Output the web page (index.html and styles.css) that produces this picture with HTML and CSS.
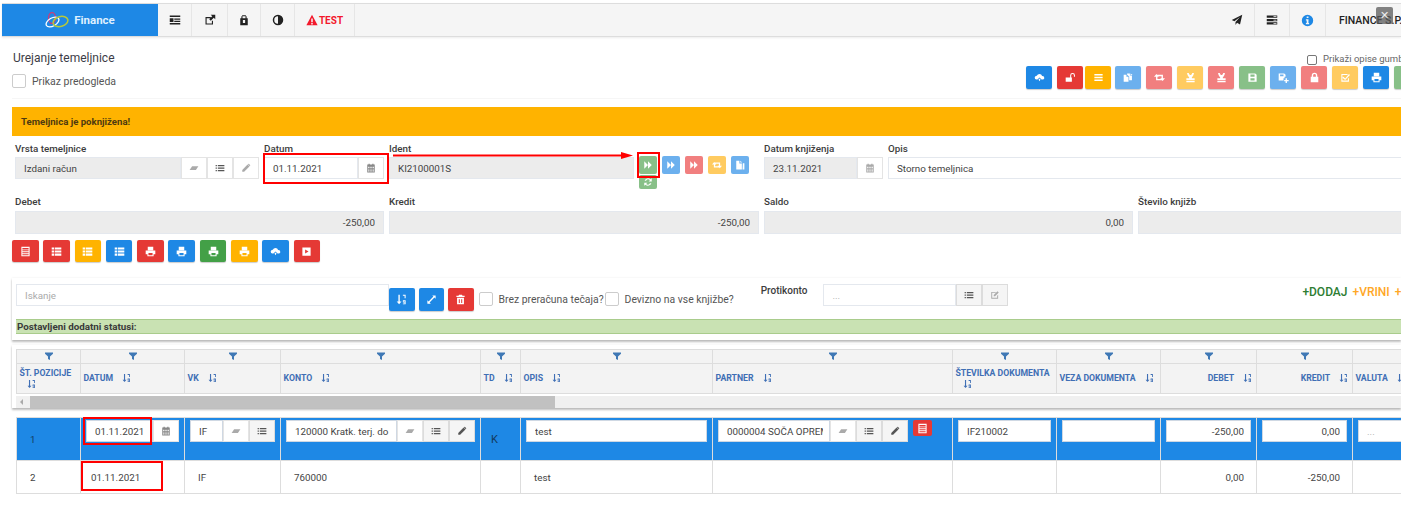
FILE: index.html
```html
<!DOCTYPE html>
<html lang="sl">
<head>
    <meta charset="UTF-8">
    <title>Urejanje temeljnice</title>
    <link rel="stylesheet" href="styles.css">
</head>
<body>
    <svg class="sprite" width="0" height="0">
        <symbol id="i-indent" viewBox="0 0 16 16"><path d="M1 2h14v2H1zM7 6h8v1.500H7zM7 9h8v1.500H7zM1 12h14v2H1zM1 5.500h5v5H1z"/></symbol>
        <symbol id="i-external" viewBox="0 0 16 16"><path d="M2 4h7v1.500H3.500v7h7V9H12v5H2zM9 1h6v6l-2-2-4 4-2-2 4-4z"/></symbol>
        <symbol id="i-bag" viewBox="0 0 16 16"><path d="M5.500 3V1.500h5V3h1v2.500H13V15H3V5.500h1.500V3zM6 5.500h4V3H6zM6.500 8v4h3V8z"/></symbol>
        <symbol id="i-adjust" viewBox="0 0 16 16"><path fill-rule="evenodd" d="M8 1a7 7 0 1 0 0 14A7 7 0 0 0 8 1zm0 2v10a5 5 0 0 1 0-10z"/></symbol>
        <symbol id="i-warn" viewBox="0 0 16 16"><path fill-rule="evenodd" d="M8 1l7.500 14H.5zM7 6v5h2V6zm0 6v2h2v-2z"/></symbol>
        <symbol id="i-plane" viewBox="0 0 16 16"><path d="M15 1L12 14 8 11.500 6 14.500V10.500L12 4 4.500 9.500 1 8z"/></symbol>
        <symbol id="i-server" viewBox="0 0 16 16"><path d="M1 2h14v3H1zM1 6.500h14v3H1zM1 11h14v3H1z"/><path fill="#f5f5f5" d="M10 3h4v1h-4zM10 7.500h4v1h-4zM10 12h4v1h-4z"/></symbol>
        <symbol id="i-info" viewBox="0 0 16 16"><path fill-rule="evenodd" d="M8 1a7 7 0 1 0 0 14A7 7 0 0 0 8 1zM7 3h2.200v2H7zM6 6.500h3.200V11H10v1.500H6V11h1V8H6z"/></symbol>
        <symbol id="i-cloud" viewBox="0 0 16 16"><path d="M8 3a4 4 0 0 1 3.800 2.800A3 3 0 0 1 15 9a2.800 2.800 0 0 1-2.500 2H11L8 8 5 11H3.500A3 3 0 0 1 1 8a3 3 0 0 1 3-2.500A4.500 4.500 0 0 1 8 3zM6.500 11H7V9.800h2V11h.5L8 13.500z"/></symbol>
        <symbol id="i-unlock" viewBox="0 0 16 16"><path d="M1 8h9v6H1zM7.500 8V5a3.500 3.500 0 0 1 7 0v2H13V5a2 2 0 0 0-4 0v3z"/></symbol>
        <symbol id="i-bars" viewBox="0 0 16 16"><path d="M2 3h12v2H2zM2 7h12v2H2zM2 11h12v2H2z"/></symbol>
        <symbol id="i-copy" viewBox="0 0 16 16"><path d="M1 4h4v3h3v7H1zM6 2h4v3h3v-.5V12H9V6.500L6 4zM11 2l3 2.500h-3z"/></symbol>
        <symbol id="i-retweet" viewBox="0 0 16 16"><path d="M3.500 3L7 7H5v3h5l2 2H3V7H0zM12.500 13L9 9h2V6H6L4 4h9v5h3z"/></symbol>
        <symbol id="i-stamp" viewBox="0 0 16 16"><path d="M3 1.500h2.500C6 3.500 7 4.500 8 4.500s2-1 2.500-3H13c-.5 3-1.500 5-3 6V9h4v3H2V9h4V7.500c-1.500-1-2.500-3-3-6zM2 13h12v2H2z"/></symbol>
        <symbol id="i-save" viewBox="0 0 16 16"><path fill-rule="evenodd" d="M2 2h10l2 2v10H2zm3 1.500V7h6V3.500zM5 9v3.500h6V9z"/></symbol>
        <symbol id="i-saveplus" viewBox="0 0 16 16"><path fill-rule="evenodd" d="M1 2h8l2 2v3H9.500v2H8v3.500H1zm2 1.500V6h5V3.500zM11 9h2v2.500h2.500v2H13V16h-2v-2.500H9v-2h2z"/></symbol>
        <symbol id="i-lock" viewBox="0 0 16 16"><path d="M2.500 7H4V5a4 4 0 0 1 8 0v2h1.500v8h-11zM6 7h4V5a2 2 0 0 0-4 0z"/></symbol>
        <symbol id="i-check" viewBox="0 0 16 16"><path d="M2 3h9v1.500H3.500v8h8V9H13v5H2zM5 7l2.500 2.500L13 3l1.500 1.500-7 7L3.500 8.500z"/></symbol>
        <symbol id="i-print" viewBox="0 0 16 16"><path fill-rule="evenodd" d="M4 1h8v5H4zM1 6.500h14V12h-2.500v3h-9v-3H1zM5 10v3.500h6V10z"/></symbol>
        <symbol id="i-thlist" viewBox="0 0 16 16"><path d="M1 2h3.500v3H1zM5.500 2H15v3H5.500zM1 6.500h3.500v3H1zM5.500 6.500H15v3H5.500zM1 11h3.500v3H1zM5.500 11H15v3H5.500z"/></symbol>
        <symbol id="i-listalt" viewBox="0 0 16 16"><path fill-rule="evenodd" d="M2 1h12v14H2zm1.500 2v2h9V3zm0 3v1.500h9V6zm0 3v1.500h9V9zm0 3v1.500h9V12z"/></symbol>
        <symbol id="i-play" viewBox="0 0 16 16"><path fill-rule="evenodd" d="M2 2h12v12H2zm4 3v6l5-3z"/></symbol>
        <symbol id="i-forward" viewBox="0 0 16 16"><path d="M2 2l6 6-6 6zM8 2l6 6-6 6z"/></symbol>
        <symbol id="i-refresh" viewBox="0 0 16 16"><path d="M8 2a6 6 0 0 1 4 1.500L14 2v5H9l2-2a3.500 3.500 0 0 0-6 1H2.500A6 6 0 0 1 8 2zM2 9h5l-2 2a3.500 3.500 0 0 0 6-1h2.500A6 6 0 0 1 4 12.500L2 14z"/></symbol>
        <symbol id="i-file" viewBox="0 0 16 16"><path d="M2 1h5v4.500h4V15H2zM8.500 1l3 3h-3zM12.500 5H15v10h-3z"/></symbol>
        <symbol id="i-eraser" viewBox="0 0 16 16"><path d="M5 5h10l-4 6H1z"/></symbol>
        <symbol id="i-list" viewBox="0 0 16 16"><path d="M1 3h2v2H1zM4.500 3H15v2H4.500zM1 7h2v2H1zM4.500 7H15v2H4.500zM1 11h2v2H1zM4.500 11H15v2H4.500z"/></symbol>
        <symbol id="i-pencil" viewBox="0 0 16 16"><path d="M2 11L10.500 2.500 13.500 5.500 5 14H2zM11.500 1.500a1 1 0 0 1 1.400 0l1.600 1.600a1 1 0 0 1 0 1.400l-.5.500-3-3z"/></symbol>
        <symbol id="i-calendar" viewBox="0 0 16 16"><path fill-rule="evenodd" d="M4 1h2v1.500h4V1h2v1.500h2V15H2V2.500h2zM3.500 6v2h2V6zm3.500 0v2h2V6zm3.500 0v2h2V6zm-7 3v1.500h2V9zM7 9v1.500h2V9zm3.500 0v1.500h2V9zm-7 2.500v2h2v-2zm3.500 0v2h2v-2zm3.500 0v2h2v-2z"/></symbol>
        <symbol id="i-sort" viewBox="0 0 16 16"><path d="M3.500 1h2v10H8l-3.500 4L1 11h2.500zM10 1h4v5h-1.500V2.500H10zM10 9h4v6h-4v-1.300h2.500v-1.200H10zM11.200 10.200v1h1.300v-1z"/></symbol>
        <symbol id="i-expand" viewBox="0 0 16 16"><path d="M9 2h5v5l-1.800-1.800L5.200 12.200 7 14H2V9l1.800 1.800 7-7z"/></symbol>
        <symbol id="i-trash" viewBox="0 0 16 16"><path fill-rule="evenodd" d="M6 1h4l1 1.500h3V4.500H2V2.500h3zM3 5.500h10V15H3zM5.500 7.500v5.500H7V7.500zm3.500 0v5.500h1.500V7.500z"/></symbol>
        <symbol id="i-edit" viewBox="0 0 16 16"><path d="M2 3h8L8.500 4.500h-5v8h8V9L13 7.500V14H2zM6 8l6-6 2 2-6 6H6z"/></symbol>
        <symbol id="i-filter" viewBox="0 0 16 16"><path d="M0 1h16v2.500L10 9v7l-4-2V9L0 3.500z"/></symbol>
    </svg>

    <div class="page">
        <div class="topbar">
            <div class="brand">
                <svg class="brand-logo" viewBox="0 0 24 16">
                    <ellipse cx="7" cy="6" rx="3.500" ry="5.500" fill="none" stroke="#c4407f" stroke-width="1.300"/>
                    <ellipse cx="7.500" cy="10" rx="7" ry="4" fill="none" stroke="#fff" stroke-width="1.300" transform="rotate(-30 7.500 10)"/>
                    <ellipse cx="15.500" cy="9.500" rx="7.500" ry="5" fill="none" stroke="#b7c93a" stroke-width="1.500" transform="rotate(-15 15.500 9.500)"/>
                </svg>
                <span>Finance</span>
            </div>
            <div class="nav-item"><svg class="ico"><use href="#i-indent"/></svg></div>
            <div class="nav-item nav-wide"><svg class="ico"><use href="#i-external"/></svg></div>
            <div class="nav-item nav-narrow"><svg class="ico"><use href="#i-bag"/></svg></div>
            <div class="nav-item"><svg class="ico"><use href="#i-adjust"/></svg></div>
            <div class="nav-item nav-test"><svg class="ico"><use href="#i-warn"/></svg>TEST</div>
            <div class="nav-right">
                <div class="nav-item"><svg class="ico"><use href="#i-plane"/></svg></div>
                <div class="nav-item"><svg class="ico"><use href="#i-server"/></svg></div>
                <div class="nav-item nav-info"><svg class="ico"><use href="#i-info"/></svg></div>
                <div class="nav-user">FINANCE S.P.</div>
            </div>
        </div>

        <div class="content">
            <div class="head">
                <div class="head-left">
                    <div class="title">Urejanje temeljnice</div>
                    <label class="check-row"><span class="check"></span>Prikaz predogleda</label>
                </div>
                <div class="head-right">
                    <label class="btn-desc"><span class="check-small"></span>Prikaži opise gumbov</label>
                    <div class="btn-row">
                        <button class="btn blue"><svg class="ico"><use href="#i-cloud"/></svg></button>
                        <button class="btn red"><svg class="ico"><use href="#i-unlock"/></svg></button>
                        <button class="btn orange tight"><svg class="ico"><use href="#i-bars"/></svg></button>
                        <button class="btn lblue semi"><svg class="ico"><use href="#i-copy"/></svg></button>
                        <button class="btn lred"><svg class="ico"><use href="#i-retweet"/></svg></button>
                        <button class="btn lorange"><svg class="ico"><use href="#i-stamp"/></svg></button>
                        <button class="btn lred"><svg class="ico"><use href="#i-stamp"/></svg></button>
                        <button class="btn lgreen"><svg class="ico"><use href="#i-save"/></svg></button>
                        <button class="btn lblue"><svg class="ico"><use href="#i-saveplus"/></svg></button>
                        <button class="btn lred"><svg class="ico"><use href="#i-lock"/></svg></button>
                        <button class="btn lorange"><svg class="ico"><use href="#i-check"/></svg></button>
                        <button class="btn blue"><svg class="ico"><use href="#i-print"/></svg></button>
                        <button class="btn lgreen"></button>
                    </div>
                </div>
            </div>

            <div class="banner">Temeljnica je poknjižena!</div>

            <div class="form-row">
                <div class="field w-vrsta">
                    <label>Vrsta temeljnice</label>
                    <div class="igroup">
                        <input class="ro" value="Izdani račun">
                        <span class="addon light"><svg class="ico"><use href="#i-eraser"/></svg></span>
                        <span class="addon"><svg class="ico"><use href="#i-list"/></svg></span>
                        <span class="addon light"><svg class="ico"><use href="#i-pencil"/></svg></span>
                    </div>
                </div>
                <div class="field w-datum">
                    <label>Datum</label>
                    <div class="igroup">
                        <input value="01.11.2021">
                        <span class="addon muted"><svg class="ico"><use href="#i-calendar"/></svg></span>
                    </div>
                </div>
                <div class="field w-ident">
                    <label>Ident</label>
                    <div class="igroup"><input class="ro" value="KI2100001S"></div>
                </div>
                <div class="ident-btns">
                    <button class="btn-sm lgreen"><svg class="ico"><use href="#i-forward"/></svg></button>
                    <button class="btn-sm lblue"><svg class="ico"><use href="#i-forward"/></svg></button>
                    <button class="btn-sm lred"><svg class="ico"><use href="#i-forward"/></svg></button>
                    <button class="btn-sm lorange"><svg class="ico"><use href="#i-retweet"/></svg></button>
                    <button class="btn-sm lblue"><svg class="ico"><use href="#i-file"/></svg></button>
                    <button class="btn-sm btn-low lgreen"><svg class="ico"><use href="#i-refresh"/></svg></button>
                </div>
                <div class="field w-knjizenje">
                    <label>Datum knjiženja</label>
                    <div class="igroup">
                        <input class="ro" value="23.11.2021">
                        <span class="addon light"><svg class="ico"><use href="#i-calendar"/></svg></span>
                    </div>
                </div>
                <div class="field w-opis">
                    <label>Opis</label>
                    <div class="igroup"><input value="Storno temeljnica"></div>
                </div>
            </div>

            <div class="form-row totals">
                <div class="field w-t1"><label>Debet</label><input class="ro num tall" value="-250,00"></div>
                <div class="field w-t2"><label>Kredit</label><input class="ro num tall" value="-250,00"></div>
                <div class="field w-t1"><label>Saldo</label><input class="ro num tall" value="0,00"></div>
                <div class="field w-t4"><label>Število knjižb</label><input class="ro num tall" value=""></div>
            </div>

            <div class="btn-row doc-btns">
                <button class="btn red"><svg class="ico"><use href="#i-listalt"/></svg></button>
                <button class="btn red"><svg class="ico"><use href="#i-thlist"/></svg></button>
                <button class="btn orange"><svg class="ico"><use href="#i-thlist"/></svg></button>
                <button class="btn blue"><svg class="ico"><use href="#i-thlist"/></svg></button>
                <button class="btn red"><svg class="ico"><use href="#i-print"/></svg></button>
                <button class="btn blue"><svg class="ico"><use href="#i-print"/></svg></button>
                <button class="btn green"><svg class="ico"><use href="#i-print"/></svg></button>
                <button class="btn orange"><svg class="ico"><use href="#i-print"/></svg></button>
                <button class="btn blue"><svg class="ico"><use href="#i-cloud"/></svg></button>
                <button class="btn red"><svg class="ico"><use href="#i-play"/></svg></button>
            </div>

            <div class="panel tools-panel">
                <div class="tools">
                    <input class="search" placeholder="Iskanje">
                    <div class="tool-btns">
                        <button class="btn blue"><svg class="ico"><use href="#i-sort"/></svg></button>
                        <button class="btn blue"><svg class="ico"><use href="#i-expand"/></svg></button>
                        <button class="btn red"><svg class="ico"><use href="#i-trash"/></svg></button>
                    </div>
                    <label class="tool-check"><span class="check"></span>Brez preračuna tečaja?</label>
                    <label class="tool-check second"><span class="check"></span>Devizno na vse knjižbe?</label>
                    <span class="proti">Protikonto</span>
                    <div class="igroup proti-group">
                        <input placeholder="...">
                        <span class="addon grey"><svg class="ico"><use href="#i-list"/></svg></span>
                        <span class="addon grey light"><svg class="ico"><use href="#i-edit"/></svg></span>
                    </div>
                    <div class="add-links">
                        <a href="#" class="add-green">+DODAJ</a>
                        <a href="#" class="add-orange">+VRINI</a>
                        <a href="#" class="add-orange">+I</a>
                    </div>
                </div>
                <div class="status">Postavljeni dodatni statusi:</div>
            </div>

            <div class="panel grid-panel">
                <table class="grid grid-head">
                    <colgroup>
                        <col class="c1"><col class="c2"><col class="c3"><col class="c4"><col class="c5"><col class="c6"><col class="c7"><col class="c8"><col class="c9"><col class="c10"><col class="c11"><col class="c12">
                    </colgroup>
                    <tr class="filters">
                        <td><svg class="funnel"><use href="#i-filter"/></svg></td>
                        <td><svg class="funnel"><use href="#i-filter"/></svg></td>
                        <td><svg class="funnel"><use href="#i-filter"/></svg></td>
                        <td><svg class="funnel"><use href="#i-filter"/></svg></td>
                        <td><svg class="funnel"><use href="#i-filter"/></svg></td>
                        <td><svg class="funnel"><use href="#i-filter"/></svg></td>
                        <td><svg class="funnel"><use href="#i-filter"/></svg></td>
                        <td><svg class="funnel"><use href="#i-filter"/></svg></td>
                        <td><svg class="funnel"><use href="#i-filter"/></svg></td>
                        <td><svg class="funnel"><use href="#i-filter"/></svg></td>
                        <td><svg class="funnel"><use href="#i-filter"/></svg></td>
                        <td></td>
                    </tr>
                    <tr class="titles">
                        <th>ŠT. POZICIJE <svg class="sort wrap"><use href="#i-sort"/></svg></th>
                        <th>DATUM <svg class="sort"><use href="#i-sort"/></svg></th>
                        <th>VK <svg class="sort"><use href="#i-sort"/></svg></th>
                        <th>KONTO <svg class="sort"><use href="#i-sort"/></svg></th>
                        <th>TD <svg class="sort"><use href="#i-sort"/></svg></th>
                        <th>OPIS <svg class="sort"><use href="#i-sort"/></svg></th>
                        <th>PARTNER <svg class="sort"><use href="#i-sort"/></svg></th>
                        <th>ŠTEVILKA DOKUMENTA <svg class="sort wrap"><use href="#i-sort"/></svg></th>
                        <th>VEZA DOKUMENTA <svg class="sort"><use href="#i-sort"/></svg></th>
                        <th class="right">DEBET <svg class="sort"><use href="#i-sort"/></svg></th>
                        <th class="right">KREDIT <svg class="sort"><use href="#i-sort"/></svg></th>
                        <th>VALUTA <svg class="sort"><use href="#i-sort"/></svg></th>
                    </tr>
                </table>
                <div class="hscroll">
                    <span class="hscroll-arrow"></span>
                    <span class="hscroll-thumb"></span>
                </div>
            </div>

            <table class="grid grid-body">
                <colgroup>
                    <col class="c1"><col class="c2"><col class="c3"><col class="c4"><col class="c5"><col class="c6"><col class="c7"><col class="c8"><col class="c9"><col class="c10"><col class="c11"><col class="c12">
                </colgroup>
                <tr class="row-active">
                    <td class="pos">1</td>
                    <td>
                        <div class="igroup">
                            <input value="01.11.2021">
                            <span class="addon muted"><svg class="ico"><use href="#i-calendar"/></svg></span>
                        </div>
                    </td>
                    <td>
                        <div class="igroup">
                            <input value="IF">
                            <span class="addon light"><svg class="ico"><use href="#i-eraser"/></svg></span>
                            <span class="addon grey"><svg class="ico"><use href="#i-list"/></svg></span>
                        </div>
                    </td>
                    <td>
                        <div class="igroup">
                            <input value="120000 Kratk. terj. do kupcev">
                            <span class="addon light"><svg class="ico"><use href="#i-eraser"/></svg></span>
                            <span class="addon grey"><svg class="ico"><use href="#i-list"/></svg></span>
                            <span class="addon grey"><svg class="ico"><use href="#i-pencil"/></svg></span>
                        </div>
                    </td>
                    <td class="td-k">K</td>
                    <td><input value="test"></td>
                    <td class="with-badge">
                        <div class="igroup">
                            <input value="0000004 SOČA OPREMA">
                            <span class="addon light"><svg class="ico"><use href="#i-eraser"/></svg></span>
                            <span class="addon grey"><svg class="ico"><use href="#i-list"/></svg></span>
                            <span class="addon grey"><svg class="ico"><use href="#i-pencil"/></svg></span>
                        </div>
                        <button class="btn-note"><svg class="ico"><use href="#i-listalt"/></svg></button>
                    </td>
                    <td><input value="IF210002"></td>
                    <td><input value=""></td>
                    <td><input class="num" value="-250,00"></td>
                    <td><input class="num" value="0,00"></td>
                    <td><input placeholder="..."></td>
                </tr>
                <tr class="row-plain">
                    <td class="pos">2</td>
                    <td>01.11.2021</td>
                    <td class="ind">IF</td>
                    <td class="ind">760000</td>
                    <td></td>
                    <td class="ind">test</td>
                    <td></td>
                    <td></td>
                    <td></td>
                    <td class="right">0,00</td>
                    <td class="right">-250,00</td>
                    <td></td>
                </tr>
            </table>
        </div>

        <!-- oznake cez posnetek -->
        <div class="mark mark-datum"></div>
        <div class="mark mark-next"></div>
        <div class="mark mark-row1"></div>
        <div class="mark mark-row2"></div>
        <svg class="mark-arrow" viewBox="0 0 240 8"><path d="M0 2.500h228V0l12 3.500L228 7V4.500H0z" fill="#f00"/></svg>
        <div class="close-x">✕</div>
    </div>
</body>
</html>
```

FILE: styles.css
```css
* {
    box-sizing: border-box;
}

html, body {
    margin: 0;
    height: 522px;
    overflow: hidden;
    background: #fff;
}

body {
    font-family: Roboto, "Liberation Sans", sans-serif;
    font-size: 9.800px;
    color: #444;
}

.sprite {
    position: absolute;
}

.page {
    position: relative;
    width: 1401px;
    height: 522px;
    padding-top: 3px;
    overflow: hidden;
}

.ico {
    width: 12px;
    height: 12px;
    fill: currentColor;
}

/* top bar */
.topbar {
    display: flex;
    height: 34px;
    margin-left: 2px;
    background: #f5f5f5;
    border-top: 1px solid #ddd;
    border-bottom: 1px solid #ddd;
    box-shadow: 0 1px 2px rgba(0,0,0,0.08);
    color: #222;
}

.brand {
    display: flex;
    align-items: center;
    justify-content: center;
    gap: 5px;
    width: 156px;
    background: #1e88e5;
    color: #dff0ff;
    font-size: 11.500px;
    font-weight: 700;
}

.brand-logo {
    width: 24px;
    height: 16px;
}

.nav-item {
    display: flex;
    align-items: center;
    justify-content: center;
    width: 34px;
    border-right: 1px solid #e6e6e6;
}

.nav-wide {
    width: 36px;
}

.nav-narrow {
    width: 33px;
}

.nav-test {
    gap: 1px;
    width: 60px;
    color: #f3192c;
    font-size: 10px;
    font-weight: 700;
}

.nav-right {
    display: flex;
    margin-left: auto;
}

.nav-right .nav-item {
    width: 35px;
    border-right: 0;
    border-left: 1px solid #e6e6e6;
}

.nav-right .nav-item:first-child {
    border-left: 0;
}

.nav-right .nav-info {
    width: 36px;
    color: #1e88e5;
}

.nav-info .ico {
    width: 13px;
    height: 13px;
}

.nav-user {
    display: flex;
    align-items: center;
    width: 76px;
    padding-left: 13px;
    border-left: 1px solid #e6e6e6;
    font-size: 10.500px;
    font-weight: 500;
    white-space: nowrap;
}

/* content */
.content {
    padding-left: 12px;
}

.head {
    display: flex;
    height: 62px;
    margin-bottom: 8px;
    border-bottom: 1px solid #f6f6f6;
}

.head-left {
    flex: 0 0 1014px;
}

.title {
    margin: 14px 0 0 1px;
    font-size: 12px;
    color: #3c3c46;
    line-height: 14px;
}

.check-row {
    display: flex;
    align-items: center;
    gap: 6px;
    margin-top: 9px;
    font-size: 10.500px;
    color: #555;
}

.check {
    display: block;
    flex: none;
    width: 14px;
    height: 14px;
    background: #fff;
    border: 1px solid #ccc;
    border-radius: 2px;
}

.head-right {
    flex: none;
}

.btn-desc {
    display: flex;
    align-items: center;
    gap: 6px;
    height: 12px;
    margin: 15px 0 2px 281px;
    font-size: 9.500px;
    color: #666;
    white-space: nowrap;
}

.check-small {
    display: block;
    flex: none;
    width: 10px;
    height: 10px;
    margin-top: 4px;
    border: 1px solid #777;
    border-radius: 2px;
}

.btn-row {
    display: flex;
    gap: 5px;
}

.btn {
    display: flex;
    flex: none;
    align-items: center;
    justify-content: center;
    width: 26px;
    height: 23px;
    padding: 0;
    border: 0;
    border-radius: 2px;
    box-shadow: 0 1px 1px rgba(0,0,0,0.2);
    color: #fff;
}

.btn .ico {
    width: 11px;
    height: 11px;
}

.btn.tight {
    margin-left: -3px;
}

.btn.semi {
    margin-left: -1px;
}

.blue { background: #1e88e5; }
.red { background: #e53935; }
.orange { background: #ffb300; }
.green { background: #43a047; }
.lblue { background: #6cb0ee; }
.lred { background: #f17f7f; }
.lorange { background: #ffcb60; }
.lgreen { background: #88c088; }

.banner {
    display: flex;
    align-items: center;
    height: 29px;
    padding-left: 9px;
    background: #ffb300;
    color: #4e3a10;
    font-size: 9.600px;
    font-weight: 700;
}

/* form */
.form-row {
    display: flex;
    gap: 5px;
    height: 36px;
    margin-top: 7px;
    padding-left: 3px;
}

.field label {
    display: block;
    height: 12px;
    margin-bottom: 2px;
    color: #3c3c3c;
    font-size: 9.800px;
    font-weight: 500;
    line-height: 12px;
    white-space: nowrap;
}

.w-vrsta { flex: none; width: 244px; }
.w-datum { flex: none; width: 120px; }
.w-ident { flex: none; width: 245px; }
.w-knjizenje { flex: none; width: 119px; }
.w-opis { flex: none; width: 520px; }
.w-t1 { flex: none; width: 369px; }
.w-t2 { flex: none; width: 370px; }
.w-t4 { flex: none; width: 270px; }

input {
    display: block;
    width: 100%;
    height: 22px;
    min-width: 0;
    padding: 0 8px;
    background: #fff;
    border: 1px solid #e4e8ee;
    font-family: inherit;
    font-size: 9.800px;
    color: #444;
    outline: none;
}

input::placeholder {
    color: #aaa;
}

.ro {
    background: #ececec;
}

.num {
    text-align: right;
}

.tall {
    height: 23px;
}

.igroup {
    display: flex;
}

.igroup input {
    flex: 1;
}

.addon {
    display: flex;
    flex: none;
    align-items: center;
    justify-content: center;
    width: 26px;
    height: 22px;
    background: #fff;
    border: 1px solid #e4e4e4;
    color: #555;
}

.addon .ico {
    width: 10px;
    height: 10px;
}

.addon.light {
    color: #aaa;
}

.addon.muted {
    color: #888;
}

.addon.grey {
    background: #f5f5f5;
    border-color: #dcdcdc;
}

.ident-btns {
    display: flex;
    flex: none;
    flex-wrap: wrap;
    gap: 1px 5px;
    align-content: flex-start;
    width: 120px;
    margin-top: 13px;
}

.btn-sm {
    display: flex;
    flex: none;
    align-items: center;
    justify-content: center;
    width: 18px;
    height: 18px;
    padding: 0;
    border: 0;
    border-radius: 2px;
    color: #fff;
}

.btn-sm .ico {
    width: 10px;
    height: 10px;
}

.btn-low {
    height: 14px;
}

.totals {
    height: 38px;
    margin-top: 17px;
}

.totals label {
    margin-bottom: 3px;
}

.doc-btns {
    margin-top: 6px;
    gap: 4.800px;
}

.doc-btns .btn {
    width: 26.500px;
    height: 22px;
}

/* panels */
.panel {
    background: #fff;
    box-shadow: 0 2px 2px rgba(0,0,0,0.25), 0 0 2px rgba(0,0,0,0.08);
}

.tools-panel {
    height: 62px;
    margin-top: 16px;
    padding: 6px 0 0 4px;
}

.tools {
    display: flex;
    align-items: flex-start;
    height: 35px;
}

.search {
    flex: none;
    width: 373px;
}

.tool-btns {
    display: flex;
    flex: none;
    gap: 4px;
    margin-top: 4px;
}

.tool-btns .btn {
    width: 25.500px;
}

.tool-check {
    display: flex;
    flex: none;
    align-items: center;
    gap: 6px;
    margin: 8px 0 0 5px;
    font-size: 10.400px;
    color: #555;
    white-space: nowrap;
}

.tool-check.second {
    margin-left: 1px;
}

.proti {
    flex: none;
    margin: 1px 16px 0 27px;
    color: #3c3c3c;
    font-size: 10px;
    font-weight: 500;
}

.proti-group {
    flex: none;
    width: 185px;
}

.add-links {
    display: flex;
    flex: none;
    gap: 5px;
    margin: 1px 0 0 294px;
    font-size: 12px;
    font-weight: 500;
    white-space: nowrap;
}

.add-links a {
    text-decoration: none;
}

.add-green {
    color: #2e7d32;
}

.add-orange {
    color: #ffa726;
}

.status {
    height: 15px;
    padding-left: 1px;
    background: #c9e2b3;
    border-top: 1px solid #a9cc8c;
    border-bottom: 1px solid #a9cc8c;
    color: #3a3a3a;
    font-size: 9.800px;
    font-weight: 700;
    line-height: 13px;
}

/* grids */
.grid {
    table-layout: fixed;
    width: 1440px;
    border-collapse: collapse;
}

.c1 { width: 64px; }
.c2 { width: 104px; }
.c3 { width: 96px; }
.c4 { width: 200px; }
.c5 { width: 40px; }
.c6 { width: 192px; }
.c7 { width: 240px; }
.c8 { width: 104px; }
.c9 { width: 104px; }
.c10 { width: 96px; }
.c11 { width: 96px; }
.c12 { width: 104px; }

.grid td, .grid th {
    border: 1px solid #ddd;
}

.grid-panel {
    height: 63px;
    margin-top: 5px;
    padding: 4px 0 0 4px;
    overflow: hidden;
}

.grid-head {
    background: #f3f3f3;
}

.filters td {
    height: 14px;
    padding: 0;
    text-align: center;
    line-height: 10px;
}

.funnel {
    width: 8px;
    height: 8px;
    fill: #3f78b5;
}

.titles th {
    height: 30px;
    padding: 0 2.500px 2px;
    color: #3f6fb5;
    font-size: 8.700px;
    font-weight: 700;
    line-height: 12px;
    text-align: left;
    white-space: nowrap;
}

.titles th.right {
    text-align: right;
    padding-right: 4px;
}

.sort {
    width: 9px;
    height: 10px;
    margin-left: 7px;
    fill: #3f6fb5;
    vertical-align: -2px;
}

.sort.wrap {
    display: block;
    margin: 0 0 0 7px;
}

.hscroll {
    display: flex;
    align-items: stretch;
    height: 13px;
    margin-top: 2px;
    background: #f0f0f0;
    border-bottom: 1px solid #ccc;
}

.hscroll-arrow {
    width: 14px;
    position: relative;
}

.hscroll-arrow::before {
    content: '';
    position: absolute;
    left: 4px;
    top: 3px;
    border: 3px solid transparent;
    border-right-color: #aaa;
    border-left: 0;
}

.hscroll-thumb {
    width: 525px;
    background: #c1c1c1;
}

.grid-body {
    margin: 9px 0 0 4px;
    font-size: 9.800px;
    color: #444;
}

.row-active td {
    height: 43px;
    padding: 2px 5px 0;
    background: #1e88e5;
    vertical-align: top;
}

.row-active input {
    padding-right: 6px;
    border-color: #cfd8e3;
}

.row-active .pos {
    padding: 0 0 0 13px;
    color: #123a5e;
    vertical-align: middle;
}

.row-active .td-k {
    padding: 0 0 0 10px;
    color: #123a5e;
    font-size: 11px;
    vertical-align: middle;
}

.with-badge {
    position: relative;
}

.with-badge .igroup {
    width: 190px;
}

.btn-note {
    position: absolute;
    top: 2px;
    left: 200px;
    display: flex;
    align-items: center;
    justify-content: center;
    width: 19px;
    height: 16px;
    padding: 0;
    background: #e53935;
    border: 0;
    border-radius: 2px;
    color: #fff;
}

.btn-note .ico {
    width: 11px;
    height: 11px;
}

.row-plain td {
    height: 33px;
    padding: 0 10px;
}

.row-plain .pos {
    padding-left: 13px;
}

.row-plain .ind {
    padding-left: 13px;
}

.row-plain .right {
    padding-right: 12px;
    text-align: right;
}

/* annotations over the screenshot */
.mark {
    position: absolute;
    border: 2px solid #f00;
}

.mark-datum {
    left: 263px;
    top: 153px;
    width: 126px;
    height: 31px;
}

.mark-next {
    left: 637px;
    top: 152px;
    width: 23px;
    height: 26px;
}

.mark-row1 {
    left: 83px;
    top: 417px;
    width: 69px;
    height: 28px;
}

.mark-row2 {
    left: 81px;
    top: 461px;
    width: 82px;
    height: 30px;
}

.mark-arrow {
    position: absolute;
    left: 393px;
    top: 152px;
    width: 240px;
    height: 8px;
}

.close-x {
    position: absolute;
    left: 1376px;
    top: 7px;
    width: 17px;
    height: 17px;
    background: rgba(90,90,90,0.75);
    border-radius: 2px;
    color: #eee;
    font-size: 11px;
    line-height: 17px;
    text-align: center;
}
```
